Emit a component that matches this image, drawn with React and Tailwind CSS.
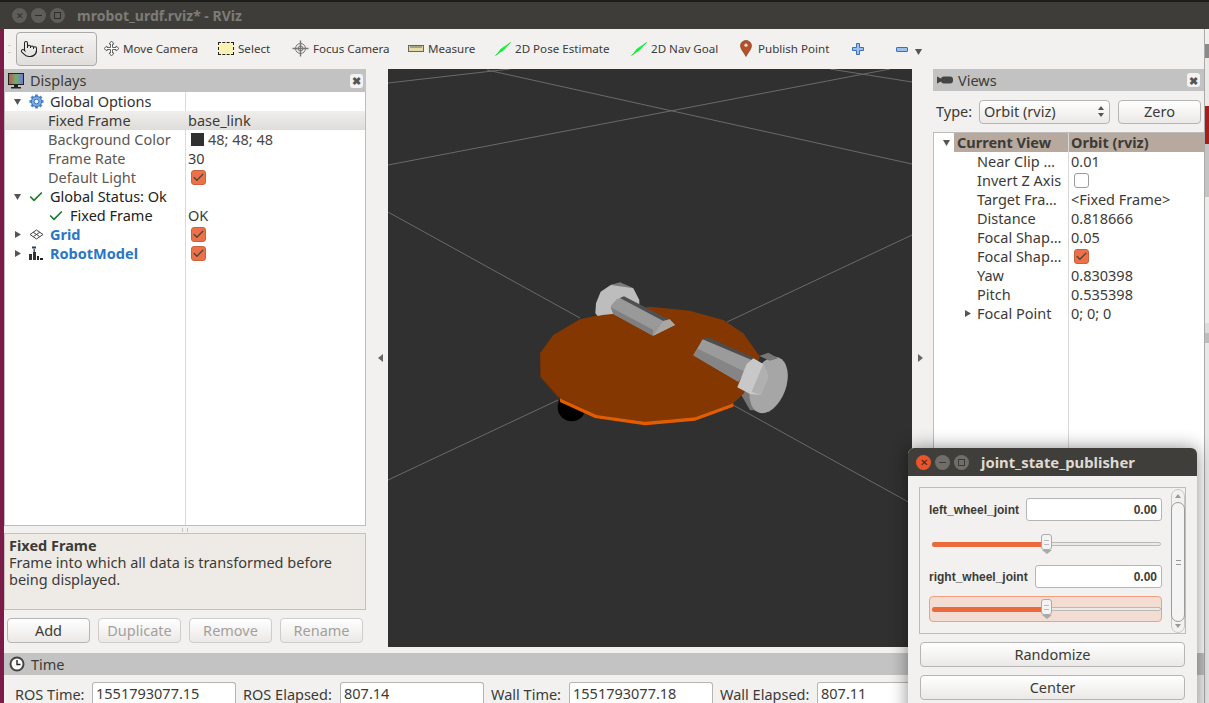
import { Check, Pointer } from "lucide-react";

const Tri = ({ dir = "down", className = "" }) => (
  <svg width="9" height="9" viewBox="0 0 9 9" className={className}>
    {dir === "down" ? <path d="M1 2h7L4.500 8z" fill="#555" /> : <path d="M2 1v7l6-3.500z" fill="#555" />}
  </svg>
);

const CheckBox = ({ on = true }) =>
  on ? (
    <span className="flex h-[15px] w-[15px] items-center justify-center rounded-[3px] border border-[#c9623c] bg-[#ec7148]">
      <Check size={13} strokeWidth={2.4} className="text-[#4c4540]" />
    </span>
  ) : (
    <span className="block h-[15px] w-[15px] rounded-[3px] border border-[#9c9c9c] bg-white" />
  );

const Row = ({ name, value, children, pad = 43, w = 180, cls = "" }) => (
  <div className={`flex h-[19px] items-center ${cls}`}>
    <div className="flex h-full shrink-0 items-center truncate" style={{ width: w, paddingLeft: pad }}>
      {name}
    </div>
    <div className="flex h-full items-center pl-[3px]">{value ?? children}</div>
  </div>
);

function GearIcon() {
  const spokes = [0, 45, 90, 135];
  return (
    <svg width="15" height="15" viewBox="0 0 16 16" className="ml-[1px]">
      {spokes.map((a) => (
        <rect key={a} x="6.500" y="0.500" width="3" height="15" fill="#4f86c8" transform={`rotate(${a} 8 8)`} />
      ))}
      <circle cx="8" cy="8" r="5.500" fill="#7ba9e0" stroke="#3c74b8" />
      <circle cx="8" cy="8" r="2.500" fill="#e8f0fa" stroke="#3c74b8" />
    </svg>
  );
}

function GridIcon() {
  return (
    <svg width="15" height="11" viewBox="0 0 15 11" fill="none" stroke="#444" strokeWidth="1">
      <path d="M7.500 1L14 5.500 7.500 10 1 5.500z" />
      <path d="M4.200 3.200l6.500 4.500M10.800 3.200L4.300 7.700" />
    </svg>
  );
}

function RobotIcon() {
  return (
    <svg width="16" height="16" viewBox="0 0 16 16">
      <rect x="4" y="0.500" width="4" height="2" fill="#2c3e60" />
      <path d="M5.500 3h1.500v3H5.500z" fill="#555" />
      <path d="M1 8h3v6H1zM5 6h3v8H5z" fill="#333" />
      <path d="M9 10h2v4H9zM12 12h3v2h-3z" fill="#222" />
    </svg>
  );
}

function MoveCameraIcon() {
  return (
    <svg width="17" height="17" viewBox="0 0 17 17" fill="#fff" stroke="#555" strokeWidth="0.900">
      <path d="M8.500 1l2.500 3H9.500v3.500H13V6l3 2.500-3 2.500V9.500H9.500V13H11l-2.500 3L6 13h1.500V9.500H4V11L1 8.500 4 6v1.500h3.500V4H6z" />
    </svg>
  );
}

function FocusIcon() {
  return (
    <svg width="17" height="17" viewBox="0 0 17 17" fill="none" stroke="#777" strokeWidth="1">
      <circle cx="8.500" cy="8.500" r="5" fill="#eee" />
      <circle cx="8.500" cy="8.500" r="2.500" />
      <path d="M8.500 0.500v16M0.500 8.500h16" strokeWidth="1.400" />
    </svg>
  );
}

function SelectIcon() {
  return <span className="block h-[13px] w-[16px] border border-dashed border-[#222] bg-[#fbf3b5]" />;
}

function RulerIcon() {
  return (
    <svg width="16" height="7" viewBox="0 0 16 7">
      <rect x="0.500" y="0.500" width="15" height="6" fill="#e5dba6" stroke="#666" />
      <path d="M3 1v2M5 1v2M7 1v2M9 1v2M11 1v2M13 1v2" stroke="#666" />
    </svg>
  );
}

function ArrowIcon() {
  return (
    <svg width="16" height="14" viewBox="0 0 16 14">
      <path d="M0.500 13.500L15.500 0.500" stroke="#0ac02c" strokeWidth="1" />
      <path d="M1 13l5-6.500 2.500 2z" fill="#10ee30" />
      <path d="M6 6.500L15.500 0.500 8.500 8.500z" fill="#18f040" />
    </svg>
  );
}

function PinIcon() {
  return (
    <svg width="12" height="17" viewBox="0 0 12 17">
      <path d="M6 0.500c3 0 5.500 2.300 5.500 5.200C11.500 9.500 7.500 13 6 16.500 4.500 13 0.500 9.500 0.500 5.700 0.500 2.800 3 0.500 6 0.500z" fill="#b8502a" stroke="#6e3a20" strokeWidth="0.600" />
      <circle cx="6" cy="5.200" r="1.600" fill="#f3e4da" />
    </svg>
  );
}

function PlusIcon() {
  return (
    <svg width="12" height="12" viewBox="0 0 12 12">
      <path d="M4.500 0.500h3v4h4v3h-4v4h-3v-4h-4v-3h4z" fill="#9cc0ea" stroke="#3c70b4" />
    </svg>
  );
}

function MonitorIcon() {
  return (
    <svg width="16" height="16" viewBox="0 0 16 16">
      <defs>
        <linearGradient id="scr" x1="0" x2="1" y1="0" y2="0">
          <stop offset="0" stopColor="#c8504a" />
          <stop offset="0.500" stopColor="#6cb070" />
          <stop offset="1" stopColor="#7474d8" />
        </linearGradient>
      </defs>
      <rect x="0.500" y="0.500" width="15" height="11" fill="url(#scr)" stroke="#222" />
      <path d="M6 12h4v2h3v1.500H3V14h3z" fill="#222" />
    </svg>
  );
}

function CameraIcon() {
  return (
    <svg width="16" height="8" viewBox="0 0 16 8" fill="#444">
      <path d="M0 0.500l4 2v3l-4 2z" />
      <rect x="4" y="0.500" width="12" height="7" rx="3" />
    </svg>
  );
}

function ClockIcon() {
  return (
    <svg width="16" height="16" viewBox="0 0 16 16" fill="none">
      <circle cx="8" cy="8" r="6.500" fill="#fff" stroke="#444" strokeWidth="2" />
      <path d="M8 4v4.500h3.500" stroke="#222" strokeWidth="1.400" />
    </svg>
  );
}

const PanelClose = () => (
  <span className="flex h-[14px] w-[13px] items-center justify-center rounded-[3px] bg-[#f3f3f3] text-[11px] leading-none font-bold text-[#555]">
    ✖
  </span>
);

const Button = ({ children, cls = "", disabled }) => (
  <div
    className={`flex items-center justify-center rounded-[4px] border border-[#b5b5b5] bg-gradient-to-b from-white to-[#ebe9e7] text-[14.5px] ${
      disabled ? "text-[#a3a09c] border-[#cfcdca]" : "text-[#3c3b37]"
    } ${cls}`}
  >
    {children}
  </div>
);

// drawn in zoomed robot coordinates, the group below scales them back down
function Robot() {
  return (
    <g transform="translate(520 270) scale(0.3333)">
      <circle cx="155" cy="412" r="42" fill="#000" />
      <path d="M655 360l35 60 60 5-40-70z" fill="#777" />
      <polygon points="60,250 100,195 180,148 240,135 390,110 510,122 610,150 670,190 720,260 672,370 640,400 525,442 375,455 230,435 120,385 62,320" fill="#843700" />
      <polygon points="60,250 62,320 120,385 112,380 60,320" fill="#7a3300" />
      <polygon points="120,385 230,435 375,455 525,442 640,400 640,410 525,452 375,466 225,444 120,396" fill="#e35d00" />
      <path d="M226 130l2-30 14-35 30-20 28-6 40 16 18 35v20l-60 20-50 5-15 3z" fill="#bdbdbd" />
      <path d="M272 45l28-8 40 18-40-6z" fill="#7a7a7a" />
      <polygon points="272,108 290,88 310,80 430,145 449,148 465,165 400,197 280,132" fill="#999" />
      <polygon points="300,84 312,79 450,150 430,153" fill="#4f4f4f" />
      <polygon points="430,153 449,148 465,165 400,197" fill="#aaa6a2" />
      <polygon points="272,112 400,180 398,197 280,132" fill="#7f7f7f" />
      <ellipse cx="746" cy="345" rx="52" ry="88" transform="rotate(20 746 345)" fill="#a6a6a6" />
      <polygon points="718,258 745,248 775,265 750,272" fill="#777" />
      <polygon points="548,208 565,202 705,265 690,272" fill="#4d4d4d" />
      <polygon points="520,256 548,208 695,270 655,335" fill="#9b9b9b" />
      <polygon points="520,256 533,236 675,305 655,335" fill="#858585" />
      <polygon points="652,352 680,282 700,265 730,282 745,320 722,375 690,372" fill="#c8c8c8" />
      <polygon points="730,282 745,320 722,375 695,365 712,325" fill="#b0b0b0" />
    </g>
  );
}

function Scene() {
  const lines = [
    [388, 83, 510, 69],
    [487, 70, 912, 164],
    [388, 165, 890, 69],
    [830, 69, 912, 82],
    [388, 212, 580, 318],
    [733, 405, 912, 504],
    [727, 322, 912, 235],
    [388, 480, 558, 400],
  ];
  return (
    <svg viewBox="388 69 524 578" className="h-full w-full">
      {lines.map((l) => (
        <line key={l.join()} x1={l[0]} y1={l[1]} x2={l[2]} y2={l[3]} stroke="#6a6a6a" strokeWidth="1" />
      ))}
      <Robot />
    </svg>
  );
}

function ToolItem({ icon, label, iconBox, gap }) {
  return (
    <div className="flex items-center" style={{ width: iconBox }}>
      {icon}
      <span style={{ marginLeft: gap }}>{label}</span>
    </div>
  );
}

function Toolbar() {
  return (
    <div className="flex h-[40px] items-center bg-[#f2f1f0] text-[11.6px] text-[#3c3b37]">
      <div className="ml-[4px] h-[8px] w-[3px] border-y border-[#cfcfcf]" />
      <div className="ml-[5px] flex h-[34px] w-[81px] items-center rounded-[4px] border border-[#aaa] bg-gradient-to-b from-[#f5f4f3] to-[#e0dedb] pl-[3px]">
        <Pointer size={18} strokeWidth={1.400} className="text-[#222]" />
        <span className="ml-[3px]">Interact</span>
      </div>
      <div className="ml-[6px] flex items-center">
        <ToolItem icon={<MoveCameraIcon />} label="Move Camera" iconBox={115} gap={3} />
        <ToolItem icon={<SelectIcon />} label="Select" iconBox={74} gap={4} />
        <ToolItem icon={<FocusIcon />} label="Focus Camera" iconBox={116} gap={4} />
        <ToolItem icon={<RulerIcon />} label="Measure" iconBox={87} gap={4} />
        <ToolItem icon={<ArrowIcon />} label="2D Pose Estimate" iconBox={136} gap={4} />
        <ToolItem icon={<ArrowIcon />} label="2D Nav Goal" iconBox={109} gap={4} />
        <ToolItem icon={<PinIcon />} label="Publish Point" iconBox={112} gap={6} />
      </div>
      <div className="w-[44px]">
        <PlusIcon />
      </div>
      <div className="h-[5px] w-[12px] rounded-[1px] border border-[#3c70b4] bg-[#9cc0ea]" />
      <Tri className="ml-[6px] mt-[4px]" />
    </div>
  );
}

function Displays() {
  return (
    <div className="flex w-[362px] shrink-0 flex-col">
      <div className="flex h-[23px] items-center bg-[#c2c2c2] pl-[4px] pr-[3px] text-[#3c3b37]">
        <MonitorIcon />
        <span className="ml-[6px] text-[14.5px]">Displays</span>
        <span className="ml-auto">
          <PanelClose />
        </span>
      </div>
      <div className="relative h-[434px] border border-t-0 border-[#bdbdbd] bg-white text-[14.5px] text-[#3c3b37]">
        <div className="absolute top-0 bottom-0 left-[180px] w-px bg-[#d9d9d9]" />
        <Row
          pad={0}
          name={
            <div className="flex items-center pl-[8px] text-[#333]">
              <Tri />
              <span className="ml-[6px]"><GearIcon /></span>
              <span className="ml-[6px]">Global Options</span>
            </div>
          }
        />
        <Row name="Fixed Frame" value="base_link" cls="bg-gradient-to-b from-[#efeeec] to-[#dfddda] relative" />
        <Row
          name={<span className="text-[#5a5855]">Background Color</span>}
          value={
            <span className="flex items-center text-[#4a4946]">
              <span className="ml-[3px] mr-[4px] h-[13px] w-[13px] bg-[#303030]" />
              48; 48; 48
            </span>
          }
        />
        <Row name={<span className="text-[#5a5855]">Frame Rate</span>} value="30" />
        <Row name={<span className="text-[#5a5855]">Default Light</span>} value={<span className="ml-[3px]"><CheckBox /></span>} />
        <Row
          pad={0}
          name={
            <div className="flex items-center pl-[8px] text-[#222]">
              <Tri />
              <Check size={16} strokeWidth={2.500} className="ml-[6px] text-[#1d7a2a]" />
              <span className="ml-[6px]">Global Status: Ok</span>
            </div>
          }
        />
        <Row
          pad={0}
          name={
            <div className="flex items-center pl-[43px] text-[#222]">
              <Check size={16} strokeWidth={2.500} className="text-[#1d7a2a]" />
              <span className="ml-[6px]">Fixed Frame</span>
            </div>
          }
          value="OK"
        />
        <Row
          pad={0}
          name={
            <div className="flex items-center pl-[8px]">
              <Tri dir="right" />
              <span className="ml-[7px]"><GridIcon /></span>
              <span className="ml-[6px] font-bold text-[#2a76c6]">Grid</span>
            </div>
          }
          value={<span className="ml-[3px]"><CheckBox /></span>}
        />
        <Row
          pad={0}
          name={
            <div className="flex items-center pl-[8px]">
              <Tri dir="right" />
              <span className="ml-[6px]"><RobotIcon /></span>
              <span className="ml-[6px] font-bold text-[#2a76c6]">RobotModel</span>
            </div>
          }
          value={<span className="ml-[3px]"><CheckBox /></span>}
        />
      </div>
      <div className="flex h-[7px] items-center justify-center">
        <div className="h-[4px] w-[6px] border-x border-[#c4c4c4]" />
      </div>
      <div className="h-[77px] border border-[#c4c2bf] bg-[#eeebe7] px-[4px] pt-[3px] text-[14.5px] leading-[17px] text-[#3c3b37]">
        <div className="font-bold">Fixed Frame</div>
        <div>
          Frame into which all data is transformed before
          <br />
          being displayed.
        </div>
      </div>
      <div className="mt-[8px] flex gap-[8px] pl-[3px]">
        <Button cls="h-[25px] w-[83px]">Add</Button>
        <Button disabled cls="h-[25px] w-[83px]">Duplicate</Button>
        <Button disabled cls="h-[25px] w-[83px]">Remove</Button>
        <Button disabled cls="h-[25px] w-[83px]">Rename</Button>
      </div>
    </div>
  );
}

function Views() {
  const rows = [
    ["Near Clip …", "0.01"],
    ["Invert Z Axis", <span className="ml-[3px]"><CheckBox on={false} /></span>],
    ["Target Fra…", "<Fixed Frame>"],
    ["Distance", "0.818666"],
    ["Focal Shap…", "0.05"],
    ["Focal Shap…", <span className="ml-[3px]"><CheckBox /></span>],
    ["Yaw", "0.830398"],
    ["Pitch", "0.535398"],
  ];
  return (
    <div className="flex w-[271px] shrink-0 flex-col">
      <div className="flex h-[22px] items-center bg-[#c2c2c2] pl-[4px] pr-[4px] text-[#3c3b37]">
        <CameraIcon />
        <span className="ml-[5px] pt-[1px] text-[14.5px]">Views</span>
        <span className="ml-auto">
          <PanelClose />
        </span>
      </div>
      <div className="flex h-[41px] items-center text-[14.5px] text-[#3c3b37]">
        <span className="ml-[3px] w-[43px]">Type:</span>
        <div className="flex h-[24px] w-[131px] items-center justify-between rounded-[4px] border border-[#b5b5b5] bg-gradient-to-b from-white to-[#ebe9e7] pl-[4px] pr-[5px]">
          Orbit (rviz)
          <span className="flex flex-col gap-[3px]">
            <span className="h-0 w-0 border-x-[3px] border-b-[4px] border-x-transparent border-b-[#555]" />
            <span className="h-0 w-0 border-x-[3px] border-t-[4px] border-x-transparent border-t-[#555]" />
          </span>
        </div>
        <Button cls="ml-[8px] h-[24px] w-[83px]">Zero</Button>
      </div>
      <div className="relative flex-1 border-l border-t border-[#bdbdbd] bg-white text-[14.5px] text-[#3c3b37]">
        <div className="absolute top-0 bottom-0 left-[134px] w-px bg-[#d9d9d9]" />
        <div className="flex h-[19px] items-center pl-[8px]">
          <Tri />
          <div className="ml-[3px] flex h-full flex-1 items-center bg-[#b7a99e] pl-[3px] font-bold">
            <span className="w-[114px]">Current View</span>
            <span>Orbit (rviz)</span>
          </div>
        </div>
        {rows.map(([n, v], i) => (
          <Row key={i} name={n} pad={43} w={134} value={<span className="flex">{v}</span>} />
        ))}
        <Row
          pad={0}
          w={134}
          name={
            <div className="flex items-center pl-[29px]">
              <Tri dir="right" />
              <span className="ml-[5px]">Focal Point</span>
            </div>
          }
          value="0; 0; 0"
        />
      </div>
    </div>
  );
}

function TimeBar() {
  const fields = [
    ["ROS Time:", "1551793077.15", 77, 144],
    ["ROS Elapsed:", "807.14", 97, 144],
    ["Wall Time:", "1551793077.18", 78, 144],
    ["Wall Elapsed:", "807.11", 97, 144],
  ];
  return (
    <div className="flex h-[50px] shrink-0 flex-col">
      <div className="flex h-[22px] items-center bg-[#c3c3c3] pl-[5px] text-[14.5px] text-[#3c3b37]">
        <ClockIcon />
        <span className="ml-[6px] pt-[1px]">Time</span>
      </div>
      <div className="flex flex-1 items-start gap-[7px] pl-[11px] pt-[7px] text-[14.5px] text-[#3c3b37]">
        {fields.map(([label, val, w, iw]) => (
          <div key={label} className="flex items-start">
            <span className="mt-[3px] whitespace-nowrap leading-[18px]" style={{ width: w }}>{label}</span>
            <div className="h-[21px] rounded-t-[3px] border border-b-0 border-[#b5b5b5] bg-white pl-[3px] pt-[1px] leading-[19px]" style={{ width: iw }}>
              {val}
            </div>
          </div>
        ))}
      </div>
    </div>
  );
}

const Slider = ({ active }) => (
  <div className={`relative h-[26px] w-[233px] rounded-[4px] ${active ? "border border-[#f0a080] bg-[#f3dcd2]" : "border border-transparent"}`}>
    <div className="absolute top-[10px] left-[2px] h-[4px] w-[229px] rounded-full border border-[#bdbab6] bg-[#eceae8]" />
    <div className="absolute top-[10px] left-[2px] h-[5px] w-[112px] rounded-full bg-[#ea6a3c]" />
    <div className="absolute top-[2px] left-[111px] flex h-[16px] w-[11px] items-center justify-center rounded-[3px] border border-[#aaa] bg-[#f4f4f4]">
      <div className="h-[5px] w-[5px] border-y border-[#bbb]" />
    </div>
    <div className="absolute top-[18px] left-[112px] h-0 w-0 border-x-[5px] border-t-[4px] border-x-transparent border-t-[#aaa]" />
  </div>
);

function JointWindow() {
  return (
    <div className="absolute top-[448px] left-[908px] h-[270px] w-[289px] rounded-t-[6px] bg-[#f2f1f0] shadow-[0_0_18px_rgba(0,0,0,0.45)]">
      <div className="flex h-[28px] items-center rounded-t-[6px] bg-[#3f3e3a] pl-[8px]">
        <span className="flex h-[15px] w-[15px] items-center justify-center rounded-full bg-[#e9542a] text-[10px] leading-none text-[#4a2014]">✕</span>
        <span className="ml-[4px] flex h-[15px] w-[15px] items-center justify-center rounded-full bg-[#6f6e69]">
          <span className="h-px w-[7px] bg-[#3a3a36]" />
        </span>
        <span className="ml-[4px] flex h-[15px] w-[15px] items-center justify-center rounded-full bg-[#6f6e69]">
          <span className="h-[7px] w-[7px] border border-[#3a3a36]" />
        </span>
        <span className="ml-[12px] text-[14.8px] font-bold text-[#dfdbd2]">joint_state_publisher</span>
      </div>
      <div className="mx-[11px] mt-[11px] flex h-[147px] border border-[#bdbdbd] pl-[9px]">
        <div className="flex w-[233px] flex-col pt-[10px] font-['Liberation_Sans',sans-serif] text-[12px] font-bold text-[#3c3b37]">
          <div className="flex h-[23px] items-center justify-between">
            left_wheel_joint
            <div className="flex h-[23px] w-[136px] items-center justify-end rounded-[3px] border border-[#b5b5b5] bg-white pr-[4px]">0.00</div>
          </div>
          <div className="mt-[10px]"><Slider /></div>
          <div className="mt-[8px] flex h-[23px] items-center justify-between">
            right_wheel_joint
            <div className="flex h-[23px] w-[127px] items-center justify-end rounded-[3px] border border-[#b5b5b5] bg-white pr-[4px]">0.00</div>
          </div>
          <div className="mt-[8px]"><Slider active /></div>
        </div>
        <div className="relative mt-[1px] ml-[9px] flex h-[144px] w-[14px] flex-col items-center justify-between rounded-full border border-[#c8c8c8] py-[4px]">
          <span className="h-0 w-0 border-x-[3px] border-b-[4px] border-x-transparent border-b-[#999]" />
          <span className="h-0 w-0 border-x-[3px] border-t-[4px] border-x-transparent border-t-[#999]" />
          <div className="absolute top-[12px] -left-px flex h-[120px] w-[14px] flex-col items-center justify-center rounded-full border border-[#9c9c9c] bg-[#f4f4f4]">
            <div className="h-[5px] w-[5px] border-y border-[#999]" />
          </div>
        </div>
      </div>
      <div className="mx-[12px] mt-[8px] flex flex-col gap-[8px]">
        <Button cls="h-[25px]">Randomize</Button>
        <Button cls="h-[25px]">Center</Button>
      </div>
    </div>
  );
}

function DesktopEdge() {
  return (
    <div className="flex w-[5px] shrink-0 flex-col border-l border-[#aaa] bg-[#ededec]">
      <div className="h-[15px] bg-[#f0efee]" />
      <div className="h-[14px] bg-[#8a8a8a]" />
      <div className="h-[48px] bg-[#ece9e6]" />
      <div className="h-[38px] bg-[#a81c1c]" />
      <div className="h-[53px] bg-[#c4c4c4]" />
      <div className="h-[126px] bg-[#ececeb]" />
      <div className="h-[10px] bg-[#dcdcdc]" />
      <div className="h-[10px] bg-[#bdbdbd]" />
      <div className="flex-1 bg-[#e8e8e8]" />
    </div>
  );
}

export default function App() {
  return (
    <div className="relative flex h-[703px] w-[1209px] flex-col overflow-hidden bg-[#f2f1f0] font-['Noto_Sans',sans-serif]">
      <div className="flex h-[29px] shrink-0 items-center border-t-2 border-[#1d1d1b] bg-[#3e3d39] pl-[12px]">
        <span className="flex h-[15px] w-[15px] items-center justify-center rounded-full bg-[#5e5d59] text-[9px] leading-none text-[#2f2e2b]">✕</span>
        <span className="ml-[4px] flex h-[15px] w-[15px] items-center justify-center rounded-full bg-[#5e5d59]">
          <span className="h-px w-[7px] bg-[#2f2e2b]" />
        </span>
        <span className="ml-[4px] flex h-[15px] w-[15px] items-center justify-center rounded-full bg-[#5e5d59]">
          <span className="h-[7px] w-[7px] border border-[#2f2e2b]" />
        </span>
        <span className="ml-[12px] text-[14px] font-bold text-[#7d7c76]">mrobot_urdf.rviz* - RViz</span>
      </div>
      <div className="flex min-h-0 flex-1">
        <div className="w-[4px] shrink-0 bg-[#7a1c47]" />
        <div className="flex min-w-0 flex-1 flex-col">
          <Toolbar />
          <div className="flex h-[584px] shrink-0">
            <Displays />
            <div className="flex w-[22px] shrink-0 items-start justify-end pr-[5px] pt-[285px]">
              <span className="h-0 w-0 border-y-[4px] border-r-[5px] border-y-transparent border-r-[#666]" />
            </div>
            <div className="h-[578px] w-[524px] shrink-0 bg-[#303030]">
              <Scene />
            </div>
            <div className="flex w-[21px] shrink-0 items-start justify-start pl-[6px] pt-[285px]">
              <span className="h-0 w-0 border-y-[4px] border-l-[5px] border-y-transparent border-l-[#666]" />
            </div>
            <Views />
          </div>
          <TimeBar />
        </div>
        <DesktopEdge />
      </div>
      <JointWindow />
    </div>
  );
}
